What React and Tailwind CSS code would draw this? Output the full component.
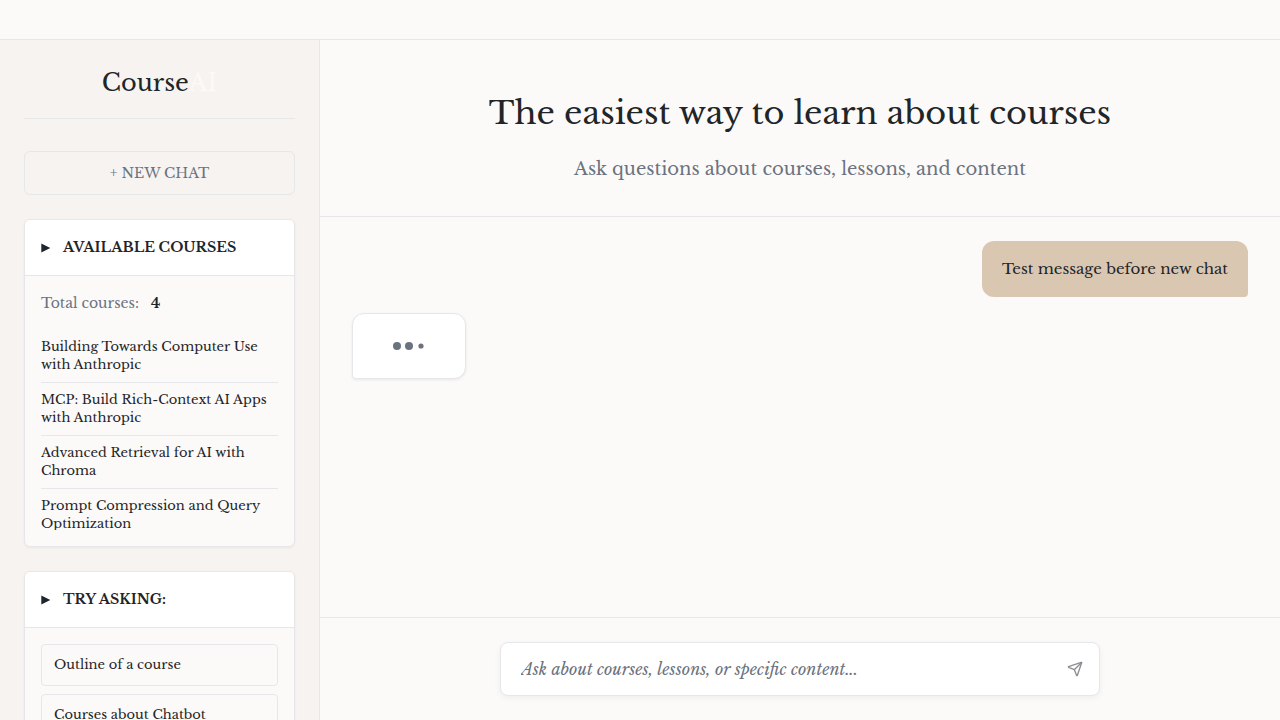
import { Send } from "lucide-react";

const courses = [
  "Building Towards Computer Use with Anthropic",
  "MCP: Build Rich-Context AI Apps with Anthropic",
  "Advanced Retrieval for AI with Chroma",
  "Prompt Compression and Query Optimization",
];

const suggestions = ["Outline of a course", "Courses about Chatbot"];

function Section({ title, children }) {
  return (
    <details
      open
      className="shrink-0 overflow-hidden rounded-md border border-[#e5e7eb] bg-[#fcfaf8] shadow-[0_1px_3px_rgba(0,0,0,0.05)]"
    >
      <summary className="flex h-14 cursor-pointer list-none items-center gap-3 border-b border-[#e5e7eb] bg-white px-4 pb-0.5 text-sm font-bold">
        <svg viewBox="0 0 10 10" className="mt-0.5 size-2.5" aria-hidden="true">
          <path d="M0.3 0.5 L9.3 5 L0.3 9.5 Z" fill="currentColor" />
        </svg>
        {title}
      </summary>
      <div className="p-4">{children}</div>
    </details>
  );
}

export default function App() {
  return (
    <div className="flex h-screen flex-col overflow-hidden bg-[#fcfaf8] font-['Libre_Baskerville','Liberation_Serif','Times_New_Roman',serif] text-[#1f2528]">
      <header className="h-10 shrink-0 border-b border-[#e5e7eb]" />
      <div className="flex min-h-0 flex-1">
        <aside className="flex w-80 shrink-0 flex-col gap-6 overflow-hidden border-r border-[#e5e7eb] bg-[#f7f3f0] p-6">
          <div className="mb-2 border-b border-[#e5e7eb] pb-4 text-center text-2xl leading-[38px]">
            Course<span className="text-[#fcfaf8]">AI</span>
          </div>
          <button
            type="button"
            className="h-11 shrink-0 rounded-md border border-[#e5e7eb] text-sm text-[#6b7280]"
          >
            + NEW CHAT
          </button>
          <Section title="AVAILABLE COURSES">
            <div className="flex gap-3 text-sm leading-[22px]">
              <span className="text-[#6b7280]">Total courses:</span>
              <span className="font-bold">4</span>
            </div>
            <ul className="mt-4 max-h-50 overflow-y-auto [scrollbar-width:none]">
              {courses.map((course) => (
                <li
                  key={course}
                  className="border-b border-[#e5e7eb] py-2 text-[13px] leading-[18px] last:border-b-0"
                >
                  {course}
                </li>
              ))}
            </ul>
          </Section>
          <Section title="TRY ASKING:">
            <div className="flex flex-col gap-2">
              {suggestions.map((text) => (
                <button
                  key={text}
                  type="button"
                  className="h-[42px] rounded border border-[#e5e7eb] px-3 text-left text-[13px]"
                >
                  {text}
                </button>
              ))}
            </div>
          </Section>
        </aside>
        <main className="flex min-w-0 flex-1 flex-col">
          <div className="flex flex-col gap-4 border-b border-[#e5e7eb] px-8 pt-[49px] pb-[31px] text-center">
            <h1 className="text-[32px] leading-[48px]">The easiest way to learn about courses</h1>
            <p className="text-lg leading-8 text-[#6b7280]">
              Ask questions about courses, lessons, and content
            </p>
          </div>
          <div className="flex min-h-0 flex-1 flex-col gap-4 overflow-hidden px-8 py-6">
            <div className="self-end rounded-xl rounded-br-sm bg-[#dac7b2] px-5 py-4 text-[15px] leading-6">
              Test message before new chat
            </div>
            <div
              role="status"
              aria-label="Assistant is typing"
              className="flex h-[66px] items-center gap-1 self-start rounded-xl rounded-bl-sm border border-[#e5e7eb] bg-white px-10 shadow-[0_1px_3px_rgba(0,0,0,0.08)]"
            >
              <span className="size-2 rounded-full bg-[#6b7280]" />
              <span className="size-2 rounded-full bg-[#6b7280]" />
              <span className="size-2 scale-65 rounded-full bg-[#6b7280]" />
            </div>
          </div>
          <div className="border-t border-[#e5e7eb] px-8 py-6">
            <form
              onSubmit={(event) => event.preventDefault()}
              className="mx-auto flex h-[54px] max-w-[600px] items-center rounded-lg border border-[#e5e7eb] bg-white pr-4 pl-5 shadow-[0_2px_6px_rgba(0,0,0,0.05)]"
            >
              <input
                type="text"
                aria-label="Ask a question"
                placeholder="Ask about courses, lessons, or specific content..."
                className="h-full min-w-0 flex-1 bg-transparent text-base outline-none placeholder:text-[#6b7280] placeholder:italic"
              />
              <button type="submit" aria-label="Send" className="text-[#8b8e90]">
                <Send size={16} strokeWidth={2} />
              </button>
            </form>
          </div>
        </main>
      </div>
    </div>
  );
}
